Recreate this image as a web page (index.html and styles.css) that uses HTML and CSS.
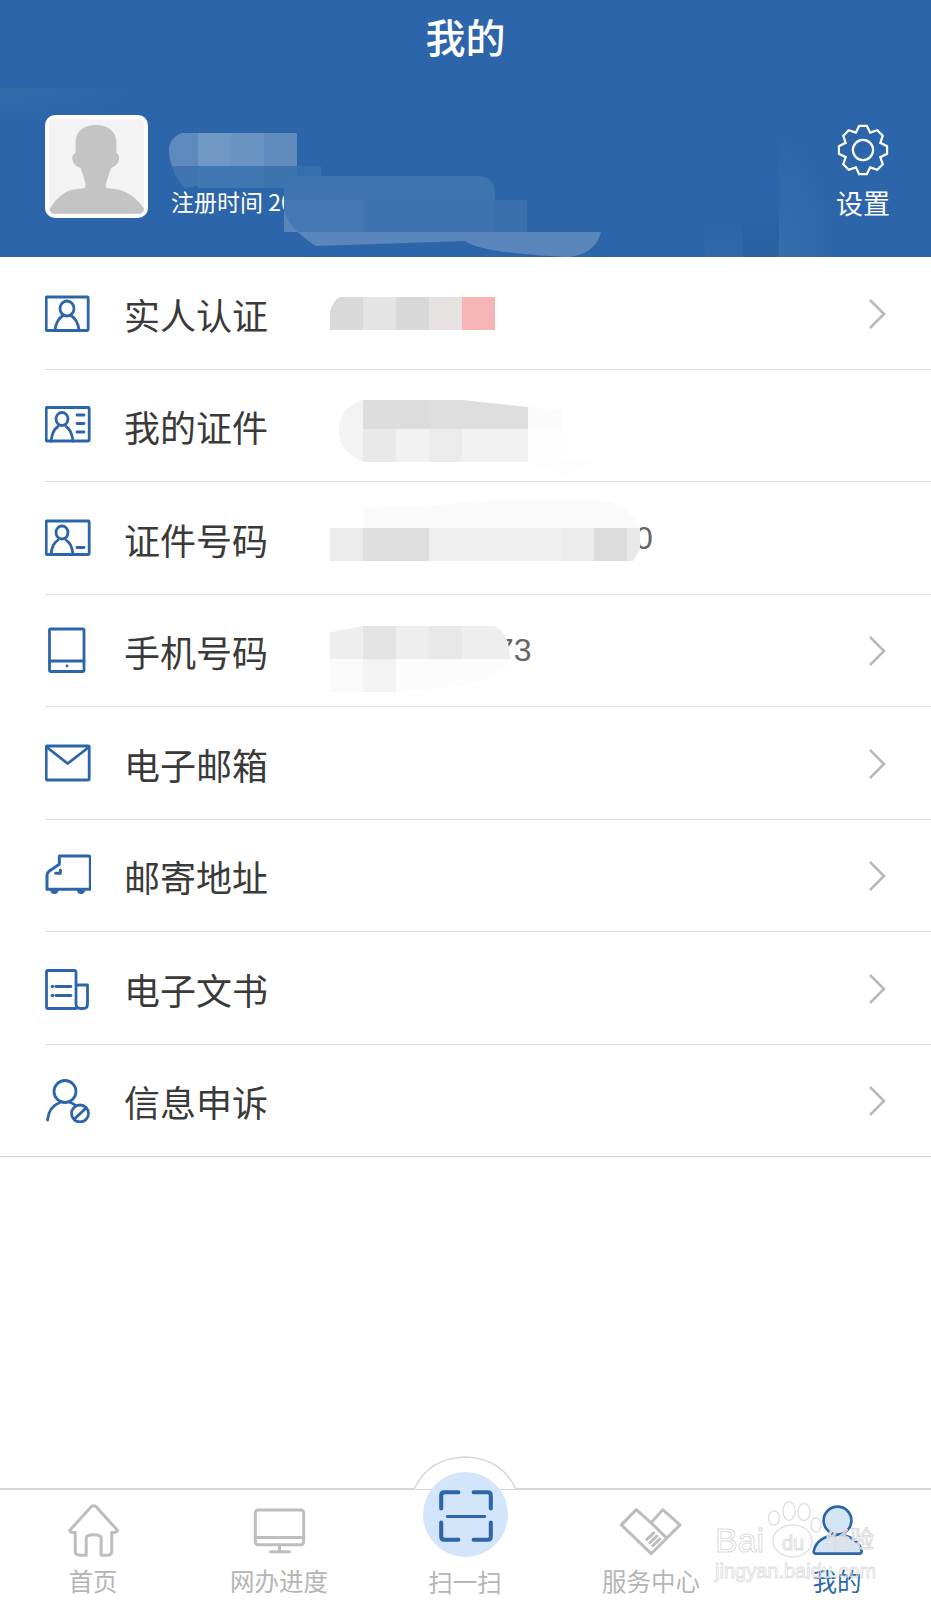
FILE: index.html
```html
<!DOCTYPE html>
<html lang="zh-CN">
<head>
<meta charset="utf-8">
<title>我的</title>
<link rel="stylesheet" href="styles.css">
</head>
<body>
<div class="page">
  <header class="header">
    <div class="topbar"><h1 class="title">我的</h1></div>
    <div class="hero">
      <div class="avatar">
        <svg class="avatar-img" viewBox="42 42 286 286"><rect x="42" y="42" width="286" height="286" rx="14" fill="#f3f3f3"/><path fill="#c4c4c4" d="M45 312C60 285 85 262 110 255L150 250L152 240C150 225 140 200 138 190C125 185 112 175 112 160C112 150 120 145 122 142L122 110C124 75 150 60 183 60C216 60 242 75 245 110L245 142C250 147 253 152 253 160C253 175 240 185 228 190C226 200 216 225 213 240L215 250L255 255C285 265 310 285 328 312C328 322 320 327 310 327L60 327C50 327 45 322 45 312Z"/></svg>
      </div>
      <div class="info"><span class="reg-time">注册时间 20</span></div>
      <div class="settings">
        <svg class="gear" viewBox="-27 -27 54 54"><polygon points="-7.45,-18 -4,-25 4,-25 7.45,-18 14.85,-20.51 20.51,-14.85 18,-7.45 25,-4 25,4 18,7.45 20.51,14.85 14.85,20.51 7.45,18 4,25 -4,25 -7.45,18 -14.85,20.51 -20.51,14.85 -18,7.45 -25,4 -25,-4 -18,-7.45 -20.51,-14.85 -14.85,-20.51"/><circle r="10.5"/></svg>
        <span class="settings-label">设置</span>
      </div>
      <svg class="hero-mosaic" viewBox="0 0 931 169">
        <path fill="#5c8abc" d="M198 45H182Q169 50 169 62Q169 72 172 78H198Z"/>
        <rect x="198" y="45" width="33" height="33" fill="#6f98c5"/>
        <rect x="231" y="45" width="33" height="33" fill="#6a94c2"/>
        <rect x="264" y="45" width="33" height="33" fill="#5f8cbd"/>
        <path fill="#3f74b0" d="M172 78H198V98L185 100Q176 92 172 78Z"/>
        <rect x="198" y="78" width="66" height="22" fill="#4276b2"/>
        <rect x="264" y="78" width="33" height="22" fill="#3e73b0"/>
        <rect x="297" y="78" width="24" height="22" fill="#366dac"/>
        <path fill="#3f74b1" d="M284 112V100Q288 90 300 88H480Q495 90 495 105V112Z"/>
        <rect x="284" y="112" width="80" height="32" fill="#4678b3"/>
        <rect x="364" y="112" width="131" height="32" fill="#3f72b0"/>
        <rect x="495" y="112" width="32" height="32" fill="#3a6fae"/>
        <path fill="#5a87bb" d="M284 112V122Q288 140 316 158L465 153Q480 165 570 169Q596 165 601 144H284Z"/>
      </svg>
    </div>
  </header>

  <ul class="list">
    <li class="row">
      <span class="icon"><svg viewBox="0 0 46 46"><rect x="1.2" y="7" width="42" height="33.5" rx="1"/><ellipse cx="22" cy="18.5" rx="7" ry="7.5"/><path d="M10 40C11 32 14 28 18 25.5M34 40C33 32 30 28 26 25.5"/></svg></span>
      <span class="label">实人认证</span>
      <span class="value">
        <svg class="mosaic" width="165" height="112" viewBox="0 0 165 112"><path fill="#d9d9d9" d="M0 73V55Q3 43 10 40H33V73Z"/><rect x="33" y="40" width="33" height="33" fill="#e4e4e4"/><rect x="66" y="40" width="33" height="33" fill="#d8d8d8"/><rect x="99" y="40" width="33" height="33" fill="#e6e2e1"/><rect x="132" y="40" width="33" height="33" fill="#f5b5b5"/></svg>
      </span>
      <svg class="chevron" viewBox="0 0 18 32"><path d="M2 2L16 16L2 30"/></svg>
    </li>
    <li class="row">
      <span class="icon"><svg viewBox="0 0 46 46"><rect x="1.2" y="5.5" width="43" height="33.5" rx="1"/><ellipse cx="17" cy="17" rx="6" ry="6.5"/><path d="M6 39C7 31 9 27 13 24.5M28 39C27 31 25 27 21 24.5M32 13H39M32 21.5H39M32 30H39"/></svg></span>
      <span class="label">我的证件</span>
      <span class="value">
        <svg class="mosaic" width="270" height="112" viewBox="0 0 270 112"><path fill="#f3f3f3" d="M33 31Q9 38 9 62Q9 82 33 93Z"/><rect x="33" y="31" width="66" height="29" fill="#dcdcdc"/><path fill="#dedede" d="M99 31H132L198 38V60H99Z"/><path fill="#fbfbfb" d="M198 38L231 41V60H198Z"/><rect x="33" y="60" width="33" height="33" fill="#e9e9e9"/><rect x="66" y="60" width="33" height="33" fill="#f2f2f2"/><rect x="99" y="60" width="33" height="33" fill="#ebebeb"/><rect x="132" y="60" width="66" height="33" fill="#f1f1f1"/><path fill="#fdfdfd" d="M198 60H231V93L265 92L235 106L198 93Z"/></svg>
      </span>
    </li>
    <li class="row">
      <span class="icon"><svg viewBox="0 0 46 46"><rect x="1.2" y="6" width="43" height="33.5" rx="1"/><ellipse cx="17" cy="17.5" rx="6" ry="6.5"/><path d="M6 39.5C7 31 9 28 13 25M28 39.5C27 31 25 28 21 25M32 32.5H39"/></svg></span>
      <span class="label">证件号码</span>
      <span class="value">
        <svg class="mosaic" width="310" height="112" viewBox="0 0 310 112"><path fill="#fafafa" d="M33 46V26L99 24L165 18H264Q295 18 310 46Z"/><rect y="46" width="33" height="33" fill="#ebebeb"/><rect x="33" y="46" width="66" height="33" fill="#dedede"/><rect x="99" y="46" width="132" height="33" fill="#efefef"/><rect x="231" y="46" width="33" height="33" fill="#ebebeb"/><rect x="264" y="46" width="33" height="33" fill="#dcdcdc"/><path fill="#e8e8e8" d="M297 46H310V68L303 79H297Z"/></svg>
        <span class="digits digits-id">0</span>
      </span>
    </li>
    <li class="row">
      <span class="icon"><svg viewBox="0 0 46 46"><rect x="4.5" y="2" width="34.5" height="42.5" rx="1"/><path d="M4.5 34H39"/><circle class="dot" cx="22" cy="39" r="1.4"/></svg></span>
      <span class="label">手机号码</span>
      <span class="value">
        <svg class="mosaic" width="180" height="112" viewBox="0 0 180 112"><path fill="#eeeeee" d="M0 65V38L33 32H66V65Z"/><rect x="33" y="32" width="33" height="33" fill="#e3e3e3"/><rect x="66" y="32" width="33" height="33" fill="#eeeeee"/><rect x="99" y="32" width="33" height="33" fill="#e8e8e8"/><path fill="#eeeeee" d="M132 32H165Q180 40 180 65H132Z"/><rect y="65" width="33" height="33" fill="#fafafa"/><rect x="33" y="65" width="33" height="33" fill="#f3f3f3"/><path fill="#fcfcfc" d="M66 65H180Q175 82 132 92L66 98Z"/></svg>
        <span class="digits digits-phone">73</span>
      </span>
      <svg class="chevron" viewBox="0 0 18 32"><path d="M2 2L16 16L2 30"/></svg>
    </li>
    <li class="row">
      <span class="icon"><svg viewBox="0 0 46 46"><rect x="1.2" y="6" width="43" height="34" rx="1"/><path d="M1.5 7L22.7 23.5L44 7"/></svg></span>
      <span class="label">电子邮箱</span>
      <span class="value"></span>
      <svg class="chevron" viewBox="0 0 18 32"><path d="M2 2L16 16L2 30"/></svg>
    </li>
    <li class="row">
      <span class="icon"><svg viewBox="12 8 138 138"><g stroke-width="9"><path d="M55 20H142Q148 20 148 28V120H18V78Q18 70 25 65L55 45ZM58 62V72H44"/><path class="fill-blue" d="M30 122A10 10 0 0 0 50 122ZM110 122A10 10 0 0 0 130 122Z"/></g></svg></span>
      <span class="label">邮寄地址</span>
      <span class="value"></span>
      <svg class="chevron" viewBox="0 0 18 32"><path d="M2 2L16 16L2 30"/></svg>
    </li>
    <li class="row">
      <span class="icon"><svg viewBox="0 0 46 46"><path d="M31 43.5H3Q1.5 43.5 1.5 42V7Q1.5 5.5 3 5.5H29Q31 5.5 31 7V39Q31 43.5 36 43.5H38Q42.5 43.5 42.5 39V20H31M11 21.5H26M11 30.5H26M7 21.5H8M7 30.5H8"/></svg></span>
      <span class="label">电子文书</span>
      <span class="value"></span>
      <svg class="chevron" viewBox="0 0 18 32"><path d="M2 2L16 16L2 30"/></svg>
    </li>
    <li class="row">
      <span class="icon"><svg viewBox="0 0 46 46"><ellipse cx="20" cy="14.5" rx="11" ry="11"/><path d="M2.5 43C3.5 33 8 28 15 25.5M25 25.5C27 26 29 27 30 28"/><circle cx="35" cy="36.5" r="8.5"/><path d="M29.5 42L41 31"/></svg></span>
      <span class="label">信息申诉</span>
      <span class="value"></span>
      <svg class="chevron" viewBox="0 0 18 32"><path d="M2 2L16 16L2 30"/></svg>
    </li>
  </ul>

  <div class="spacer"></div>

  <nav class="tabbar">
    <svg class="bulge" viewBox="0 0 104 34"><path d="M1 33Q16 2 52 1Q88 2 103 33"/></svg>
    <a class="tab">
      <svg class="tab-icon" viewBox="197 192 160 160"><path d="M205 272L270 200Q277 195 285 200L350 272Q345 280 332 278L332 335Q332 347 320 347L300 347L300 295Q300 285 277 285Q255 285 255 295L255 347L235 347Q222 347 222 335L222 278Q208 280 205 272Z"/></svg>
      <span class="tab-label">首页</span>
    </a>
    <a class="tab">
      <svg class="tab-icon" viewBox="755 192 160 160"><rect x="762" y="210" width="146" height="105" rx="8"/><path d="M762 293H908M835 315V335M808 336H865"/></svg>
      <span class="tab-label">网办进度</span>
    </a>
    <a class="tab tab-scan">
      <span class="scan-circle"><svg class="scan-icon" viewBox="0 0 84 84"><path d="M18 36V23Q18 20 21 20H35M50 20H64Q67 20 67 23V36M18 50V64Q18 67 21 67H35M50 67H64Q67 67 67 64V50"/><path class="scan-line" d="M24 44H61"/></svg></span>
      <span class="tab-label">扫一扫</span>
    </a>
    <a class="tab">
      <svg class="tab-icon" viewBox="46 25 160 160"><path d="M35 88L80 42L125 82L160 42L212 88L125 175ZM125 82L172 128M133 112L112 132M142 122L121 142M151 131L130 151"/></svg>
      <span class="tab-label">服务中心</span>
    </a>
    <a class="tab tab-active">
      <svg class="tab-icon" viewBox="332 42 160 160"><circle cx="412" cy="92" r="42"/><path d="M340 185C345 155 375 135 412 135C450 135 480 155 485 185Q485 192 478 192L347 192Q340 192 340 185Z"/></svg>
      <span class="tab-label">我的</span>
    </a>
    <div class="watermark">
      <svg class="paw" viewBox="0 0 60 60"><ellipse cx="27.5" cy="41" rx="19.5" ry="16"/><ellipse cx="9" cy="18" rx="5.5" ry="7"/><ellipse cx="24" cy="11" rx="6" ry="9.5"/><ellipse cx="39" cy="12" rx="6" ry="8.5"/><ellipse cx="51" cy="25" rx="5" ry="7"/></svg>
      <span class="wm-bai">Bai</span>
      <span class="wm-du">du</span>
      <span class="wm-jy">经验</span>
      <span class="wm-url">jingyan.baidu.com</span>
    </div>
  </nav>
</div>
</body>
</html>
```

FILE: styles.css
```css
* { box-sizing: border-box; }
html, body { margin: 0; padding: 0; background: #fff; }
body { font-family: "Noto Sans CJK SC", "Liberation Sans", sans-serif; }
.page { width: 931px; height: 1600px; display: flex; flex-direction: column; overflow: hidden; }

.header { background: #2c65a9; color: #fff; flex: none; }
.topbar { height: 88px; display: flex; justify-content: center; padding-top: 10px; }
.title { margin: 0; font-size: 40px; line-height: 52px; font-weight: 500; }
.hero {
  position: relative;
  height: 169px;
  display: flex;
  align-items: flex-start;
  padding: 27px 41px 0 45px;
  background-image:
    radial-gradient(ellipse 60px 130px at 0 100%, rgba(255,255,255,.06), rgba(255,255,255,0)),
    linear-gradient(to top, rgba(0,0,30,.05), rgba(0,0,30,0)),
    linear-gradient(to top, rgba(255,255,255,.02), rgba(255,255,255,0)),
    radial-gradient(ellipse 150px 36px at 0 0, rgba(255,255,255,.03), rgba(255,255,255,0));
  background-size: 60px 130px, 36px 60px, 38px 40px, 150px 36px;
  background-position: 779px 100%, 743px 100%, 705px 100%, 0 0;
  background-repeat: no-repeat;
}
.avatar { width: 103px; height: 103px; background: #fff; border-radius: 10px; padding: 4px; flex: none; }
.avatar-img { display: block; width: 100%; height: 100%; }
.info { margin-left: 23px; height: 101px; display: flex; align-items: flex-end; }
.reg-time { font-size: 23px; line-height: 30px; white-space: nowrap; }
.settings { margin-left: auto; padding-top: 9px; display: flex; flex-direction: column; align-items: center; width: 54px; }
.gear { width: 52px; height: 52px; fill: none; stroke: #fff; stroke-width: 2.3; }
.settings-label { font-size: 27px; line-height: 30px; margin-top: 12px; white-space: nowrap; }
.hero-mosaic { position: absolute; left: 0; top: 0; width: 931px; height: 169px; }

.list { list-style: none; margin: 0; padding: 0; flex: none; }
.row {
  height: 112.5px;
  margin-left: 45px;
  border-bottom: 1px solid #dcdcdc;
  display: flex;
  align-items: center;
}
.row:last-child { margin-left: 0; padding-left: 45px; border-bottom-color: #d0d0d0; }
.icon { width: 79px; flex: none; display: flex; }
.icon svg { width: 46px; height: 46px; fill: none; stroke: #2c65a9; stroke-width: 2.8; stroke-linejoin: round; stroke-linecap: round; }
.icon .dot { fill: #2c65a9; stroke: none; }
.icon .fill-blue { fill: #2c65a9; stroke-width: 4; }
.label { width: 206px; flex: none; margin-top: 2px; font-size: 36px; line-height: 50px; color: #3a3a3a; }
.value { flex: 1; height: 112px; display: flex; align-items: center; min-width: 0; }
.mosaic { position: relative; z-index: 1; display: block; flex: none; }
.digits { font-family: "Liberation Sans", sans-serif; font-size: 32px; line-height: 40px; color: #666; white-space: nowrap; }
.digits-id { margin-left: -5px; }
.digits-phone { margin-left: -14px; }
.chevron { width: 18px; height: 32px; flex: none; margin: 2px 45px 0 0; fill: none; stroke: #b9b9b9; stroke-width: 2.6; }

.spacer { flex: 1; }

.tabbar {
  position: relative;
  flex: none;
  height: 112px;
  padding-right: 1px;
  border-top: 2px solid #d6d6d6;
  display: grid;
  grid-template-columns: repeat(5, 1fr);
}
.bulge { position: absolute; left: 413px; top: -34px; width: 104px; height: 34px; fill: #fff; stroke: #d6d6d6; stroke-width: 1.5; }
.tab { position: relative; display: flex; flex-direction: column; align-items: center; padding-top: 14px; }
.tab-icon { width: 53px; height: 53px; overflow: visible; fill: none; stroke: #bdbdbd; stroke-width: 9; stroke-linejoin: round; stroke-linecap: round; flex: none; }
.tab-label { font-size: 24.5px; line-height: 30px; margin-top: 9px; color: #b5b5b5; white-space: nowrap; }
.tab-scan { padding-top: 0; }
.scan-circle { width: 85px; height: 85px; margin-top: -18px; border-radius: 50%; background: #d3e5fa; flex: none; position: relative; }
.scan-icon { display: block; width: 85px; height: 85px; fill: none; stroke: #2c65a9; stroke-width: 4; stroke-linecap: round; }
.scan-line { stroke-width: 2.8; }
.tab-scan .tab-label { margin-top: 10px; }
.tab-active .tab-icon { fill: #d5e5f8; stroke: #2c65a9; stroke-width: 8; }
.tab-active .tab-label { color: #2c65a9; }

.watermark { position: absolute; left: 700px; top: 0; width: 200px; height: 110px; pointer-events: none; }
.paw { position: absolute; left: 65px; top: 10px; width: 60px; height: 60px; fill: rgba(255,255,255,.3); stroke: #e0e0e0; stroke-width: 1.4; }
.wm-bai, .wm-du, .wm-jy, .wm-url { position: absolute; font-family: "Liberation Sans", sans-serif; white-space: nowrap; color: rgba(255,255,255,.6); -webkit-text-stroke: 1px #dcdcdc; }
.wm-bai { left: 15px; top: 30px; font-size: 34px; line-height: 40px; }
.wm-du { left: 82px; top: 41px; font-size: 20px; line-height: 24px; }
.wm-jy { left: 126px; top: 32px; font-family: "Noto Sans CJK SC", sans-serif; font-size: 24px; line-height: 32px; color: rgba(255,255,255,.6); }
.wm-url { left: 15px; top: 68px; font-size: 20px; line-height: 26px; color: rgba(255,255,255,.1); -webkit-text-stroke: .8px #dcdcdc; }
```
